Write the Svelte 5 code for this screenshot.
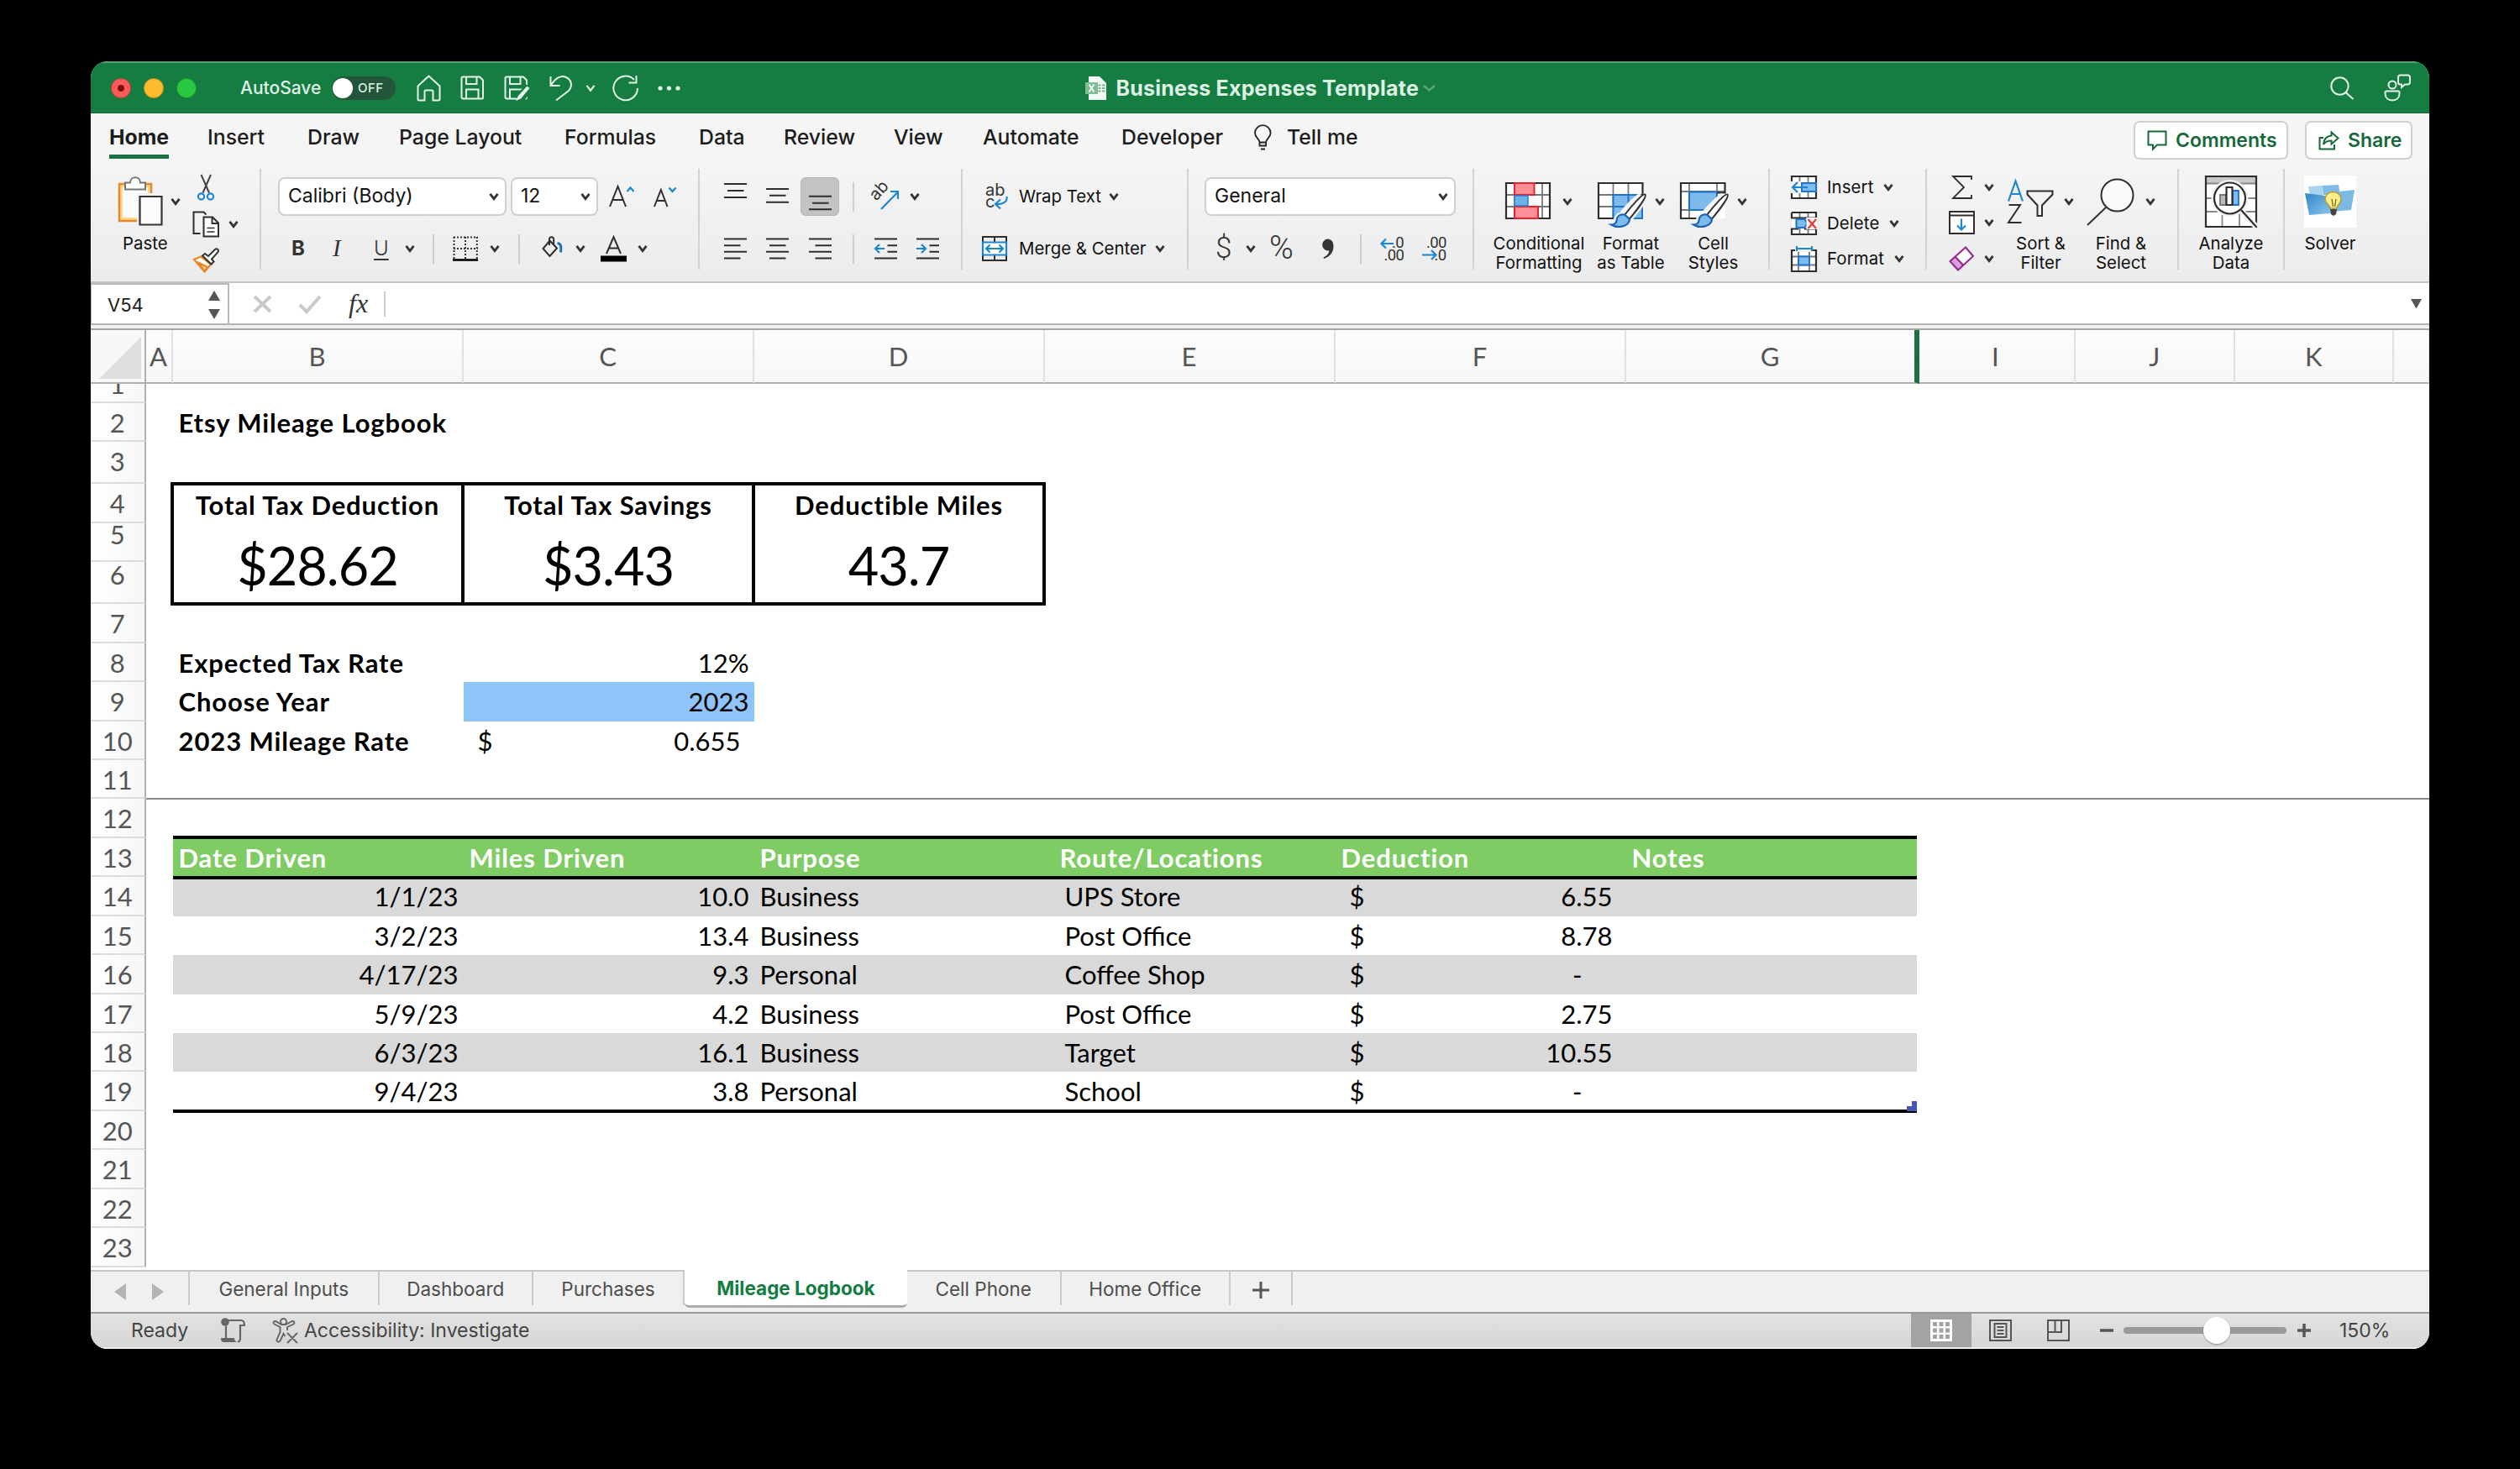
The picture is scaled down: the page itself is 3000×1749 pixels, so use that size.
<script>
  const menu = ['Home', 'Insert', 'Draw', 'Page Layout', 'Formulas', 'Data', 'Review', 'View', 'Automate', 'Developer'];

  const columns = ['A', 'B', 'C', 'D', 'E', 'F', 'G', 'I', 'J', 'K', ''];

  // nudge moves the number of a row that is taller or cut off
  const rows = Array.from({ length: 23 }, (_, i) => ({ n: i + 1, nudge: 0 }));
  rows[0].nudge = -23;
  rows[4].nudge = -10;
  rows[5].nudge = -8;

  const totals = [
    { label: 'Total Tax Deduction', value: '$28.62' },
    { label: 'Total Tax Savings', value: '$3.43' },
    { label: 'Deductible Miles', value: '43.7' },
  ];

  const headings = ['Date Driven', 'Miles Driven', 'Purpose', 'Route/Locations', 'Deduction', 'Notes'];

  const trips = [
    { date: '1/1/23', miles: '10.0', purpose: 'Business', route: 'UPS Store', deduction: '6.55' },
    { date: '3/2/23', miles: '13.4', purpose: 'Business', route: 'Post Office', deduction: '8.78' },
    { date: '4/17/23', miles: '9.3', purpose: 'Personal', route: 'Coffee Shop', deduction: '-' },
    { date: '5/9/23', miles: '4.2', purpose: 'Business', route: 'Post Office', deduction: '2.75' },
    { date: '6/3/23', miles: '16.1', purpose: 'Business', route: 'Target', deduction: '10.55' },
    { date: '9/4/23', miles: '3.8', purpose: 'Personal', route: 'School', deduction: '-' },
  ];

  const sheets = ['General Inputs', 'Dashboard', 'Purchases', 'Mileage Logbook', 'Cell Phone', 'Home Office'];
  let activeSheet = $state('Mileage Logbook');
</script>

{#snippet chevron()}
  <svg class="chev" width="12" height="10" viewBox="0 0 12 10"><path d="M1.5 1.8 6 7.6l4.5-5.8" /></svg>
{/snippet}

{#snippet lines(kind)}
  <svg width="28" height="28" viewBox="0 0 28 28" class="dark">
    {#if kind === 'left'}
      <path d="M0 2.5h27M0 10.2h19.5M0 17.8h27M0 25.5h19.5" />
    {:else if kind === 'center'}
      <path d="M0 2.5h27M4 10.2h19.5M0 17.8h27M4 25.5h19.5" />
    {:else if kind === 'right'}
      <path d="M0 2.5h27M7.5 10.2h19.5M0 17.8h27M7.5 25.5h19.5" />
    {:else}
      <path d="M0 2.5h27M15.5 10.2h11.5M15.5 17.8h11.5M0 25.5h27" />
      {#if kind === 'outdent'}
        <path class="blue" d="M12 14H1M6 9l-5 5 5 5" />
      {:else}
        <path class="blue" d="M0 14h11M6 9l5 5-5 5" />
      {/if}
    {/if}
  </svg>
{/snippet}

{#snippet floppy()}
  <path d="M3 1.5h20l4 4V26a1.5 1.5 0 0 1-1.5 1.5h-22A2 2 0 0 1 1.5 25.5V3A1.5 1.5 0 0 1 3 1.5z" />
  <path d="M7 1.5v8.500h12.500V1.5M7 27.5V16.5h14.500v11" />
{/snippet}

{#snippet paintbrush()}
  <g transform="translate(-6 2)">
    <path class="halo" d="M58 21C52 25 42 35 36 42M61 26 44 48M37 44c-5 0-8 3-8.500 7" />
    <path d="M62.500 19.500c-2.500-2-16 13.500-24.500 24.500l5.500 5c8.500-10 21.500-27 19-29.500z" fill="#fff" stroke="#333" stroke-width="2" />
    <path d="M38 43.500c-6-1-9 2-9.500 7-.4 3.500-3 5-6.500 5 8 5 21.500 2 22-6.500z" fill="#7dbbec" stroke="#1c63b7" stroke-width="2.200" />
  </g>
{/snippet}

<div class="desktop">
  <div class="window">
    <header class="titlebar">
      <div class="lights"><i class="close"></i><i class="min"></i><i class="max"></i></div>
      <span class="autosave">AutoSave</span>
      <span class="toggle"><b></b>OFF</span>
      <svg width="30" height="32" viewBox="0 0 30 32"><path d="M1.5 13.5 14.5 1.5l13 12V29a1.5 1.5 0 0 1-1.5 1.5h-6.500V20a1.5 1.5 0 0 0-1.5-1.5h-7A1.5 1.5 0 0 0 9.500 20v10.500H3A1.5 1.5 0 0 1 1.5 29z" /></svg>
      <svg width="29" height="30" viewBox="0 0 29 30">{@render floppy()}</svg>
      <svg width="31" height="30" viewBox="0 0 31 30">
        {@render floppy()}
        <path d="M30 13 18 29" stroke="#157d42" stroke-width="11" />
        <path d="M27.5 12.5 17 24l-3 6 6-2.500L30.500 15z" fill="#e9f5ec" stroke="none" />
      </svg>
      <svg width="28" height="32" viewBox="0 0 28 32"><path d="M1.5 2v11h11M2 12.5C7 4 14 0 20 3c7 3.500 7.500 11 3 16L8 30.500" /></svg>
      <svg class="chev" width="12" height="10" viewBox="0 0 12 10"><path d="M1.5 1.8 6 7.6l4.5-5.8" /></svg>
      <svg width="34" height="32" viewBox="0 0 34 32"><path d="M27 6A14.3 14.3 0 1 0 31 16M29.5 1v8.500h-9" /></svg>
      <svg width="28" height="8" viewBox="0 0 28 8" class="dots"><circle cx="3" cy="4" r="2.600" /><circle cx="13.500" cy="4" r="2.600" /><circle cx="24" cy="4" r="2.600" /></svg>
      <svg width="27" height="30" viewBox="0 0 27 30" class="file">
        <path d="M4 1h13l8 8v20H4z" fill="#f4faf5" />
        <path d="M15.500 11.500h3M20 11.500h3.500M15.500 15h3M20 15h3.500M15.500 18.500h3M20 18.500h3.500" stroke="#6fb889" stroke-width="1.800" />
        <rect x="0" y="8" width="15" height="14" fill="#7dbf94" />
        <path d="m4.500 10.500 6 9M10.500 10.500l-6 9" stroke="#fff" stroke-width="1.800" />
      </svg>
      <span class="title">Business Expenses Template</span>
      <svg class="faint" width="18" height="10" viewBox="0 0 18 10"><path d="m2 2 6.500 5.500L15 2" /></svg>
      <svg width="30" height="28" viewBox="0 0 30 28"><circle cx="11.500" cy="11.500" r="10.200" /><path d="m18.500 19 9 8" /></svg>
      <svg width="34" height="33" viewBox="0 0 34 33">
        <circle cx="10" cy="13" r="4.500" />
        <path d="M3 20.500h14a1.500 1.500 0 0 1 1.500 1.500v1.500c0 5-3.500 8-8.500 8s-8.500-3-8.500-8V22A1.500 1.500 0 0 1 3 20.500z" />
        <path d="M19.500 1.500h9a2.500 2.500 0 0 1 2.500 2.500v6a2.500 2.500 0 0 1-2.500 2.500h-3.500l-4 3.500v-3.500h-1.500A2.500 2.500 0 0 1 17 10V4a2.500 2.500 0 0 1 2.500-2.500z" />
      </svg>
    </header>

    <nav class="menu">
      {#each menu as item, i}
        <span class:current={i === 0}>{item}</span>
      {/each}
      <svg width="21" height="30" viewBox="0 0 21 30" class="bulb">
        <path d="M6.500 20.500c0-4-5.500-6-5.500-11a9.300 9.300 0 0 1 18.600 0c0 5-5.500 7-5.500 11v4H6.500zM6.500 20.500h7.600M8 28.500h5" />
      </svg>
      <span>Tell me</span>
      <button class="comments">
        <svg width="24" height="24" viewBox="0 0 24 24"><path d="M1.500 1.500h21v16H12l-5 5v-5H1.500z" /></svg>
        Comments
      </button>
      <button class="share">
        <svg width="25" height="23" viewBox="0 0 25 23"><path d="M6 8H1.500v13.500H19V16M15.500 1.500l8 7-8 7v-4c-4.500 0-7.500 1.500-9.500 4.500.5-6 3.500-10 9.500-10.500z" /></svg>
        Share
      </button>
    </nav>

    <section class="ribbon">
      <div class="group clipboard">
        <div class="big paste">
          <div class="art">
            <svg width="54" height="60" viewBox="0 0 54 60">
              <path d="M2 9h38v44H2z" fill="#fcd88d" stroke="#e8862a" stroke-width="2.500" />
              <path d="M6 13h30v36H6z" fill="#fbfbfb" />
              <path d="M9 15.500V7.500h6C15 -1 27 -1 27 7.500h6v8z" fill="#fff" stroke="#777" stroke-width="2" />
              <path d="M23 20h31v40H23z" fill="#f2f2f2" />
              <path d="M26.500 24h26v33.500h-26z" fill="#fbfbfb" stroke="#333" stroke-width="2.200" />
            </svg>
            {@render chevron()}
          </div>
          <span>Paste</span>
        </div>
        <div class="stack">
          <svg width="32" height="32" viewBox="0 0 32 32">
            <path d="m10.500 1 9.500 21.500M22 1l-9.500 21.500" stroke="#444" stroke-width="2" />
            <circle cx="10.500" cy="27" r="3.600" class="blue" /><circle cx="21.500" cy="27" r="3.600" class="blue" />
          </svg>
          <div class="pair">
            <svg width="32" height="32" viewBox="0 0 32 32" class="dark">
              <path d="M9.500 27H1.500V1.500h12l3 3" />
              <path d="M13.500 7.500H24l7 7V30.500H13.500zM23.500 7.500V15H31" fill="#fff" />
              <path d="M17.500 20.500h9M17.500 25h9" stroke-width="1.500" />
            </svg>
            {@render chevron()}
          </div>
          <svg width="32" height="30" viewBox="0 0 32 30">
            <path d="m2 14 8-3.500L22 20l-7.500 8.500z" fill="#fff" stroke="#e8862a" stroke-width="2.200" />
            <path d="m8 18 10 5-3.500 5z" fill="#fcd88d" stroke="#e8862a" stroke-width="2" />
            <path d="M12 9.500 15 7l4 3 8-8c2-2 5 .5 3.500 3L23 13.500l2.500 3-3 3z" fill="#fff" stroke="#333" stroke-width="2" />
          </svg>
        </div>
      </div>

      <div class="group font">
        <div class="line one">
          <div class="select">Calibri (Body) {@render chevron()}</div>
          <div class="select">12 {@render chevron()}</div>
          <svg width="31" height="28" viewBox="0 0 31 28" class="dark"><path d="M1 26 10.500 2 20 26M4.500 18h12" /><path class="blue" d="m21.500 8 4-4.500L29.500 8" /></svg>
          <svg width="29" height="28" viewBox="0 0 29 28" class="dark"><path d="M1 26 8.800 6 16.500 26M4 19h10" /><path class="blue" d="m18.500 3.500 4 4.500 4-4.500" /></svg>
        </div>
        <div class="line two">
          <b class="glyph">B</b>
          <i class="glyph italic">I</i>
          <span class="glyph under">U</span>
          {@render chevron()}
          <hr />
          <svg width="30" height="30" viewBox="0 0 30 30">
            <path d="M1 1.500h29M1 15h29M1.500 1v27M15 1v27M28.800 1v27" stroke="#333" stroke-width="2" stroke-dasharray="2 2" />
            <path d="M0 28.500h30" stroke="#000" stroke-width="2.600" />
          </svg>
          {@render chevron()}
          <hr />
          <svg width="26" height="30" viewBox="0 0 26 30" class="dark">
            <path d="m9.500 5.500 8.500 9L9.500 24l-8-9zM9 11V4c0-4 5-3.500 5.200 0v6" />
            <path d="M18.500 8.500c4 .5 5 3 4 11" stroke="#1c6fbf" stroke-width="3" />
          </svg>
          {@render chevron()}
          <svg width="31" height="32" viewBox="0 0 31 32" class="dark"><path d="M7 22 15.500 2 24 22M10 15.500h11" /><path d="M0 28h31" stroke="#000" stroke-width="7" /></svg>
          {@render chevron()}
        </div>
      </div>

      <div class="group align">
        <div class="line one">
          <svg width="28" height="40" viewBox="0 0 28 40" class="dark"><path d="M0 5h27M4 13h19.500M0 21h27" /></svg>
          <svg width="28" height="40" viewBox="0 0 28 40" class="dark"><path d="M0 11h27M4 18.800h19.500M0 26.800h27" /></svg>
          <div class="pressed"><svg width="28" height="40" viewBox="0 0 28 40" class="dark"><path d="M0 18.800h27M4 26.800h19.500M0 34.300h27" /></svg></div>
          <hr />
          <svg width="33" height="33" viewBox="0 0 33 33">
            <text x="-1" y="0" transform="translate(6 21) rotate(-48)" class="tiny">ab</text>
            <path class="blue" d="M11 31 30.500 11M22 10h9v9" />
          </svg>
          {@render chevron()}
        </div>
        <div class="line two">
          {@render lines('left')}
          {@render lines('center')}
          {@render lines('right')}
          <hr />
          {@render lines('outdent')}
          {@render lines('indent')}
        </div>
      </div>

      <div class="group wrap">
        <div class="line one">
          <svg width="30" height="34" viewBox="0 0 30 34">
            <text x="4" y="16" class="tiny">ab</text><text x="4" y="30" class="tiny">c</text>
            <path class="blue" d="M29.500 17c1 6-4 9.500-12 9M22 20.500 16 26l6 5.500" />
          </svg>
          <span>Wrap Text</span>
          {@render chevron()}
        </div>
        <div class="line two">
          <svg width="30" height="30" viewBox="0 0 30 30" class="dark">
            <path d="M1 1h28v28H1zM15 1v7M15 22v7" />
            <path d="M1 7.500h28v15H1z" fill="#fff" class="blue" />
            <path class="blue" d="M5 15h20M9.500 10.500 5 15l4.500 4.500M20.500 10.500 25 15l-4.500 4.500" />
          </svg>
          <span>Merge &amp; Center</span>
          {@render chevron()}
        </div>
      </div>

      <div class="group number">
        <div class="line one">
          <div class="select">General {@render chevron()}</div>
        </div>
        <div class="line two">
          <span class="sign">$</span>
          {@render chevron()}
          <span class="sign percent">%</span>
          <svg width="17" height="26" viewBox="0 0 17 26"><path d="M8 1.500c5 0 7.500 3.500 7.500 8.500 0 7.500-4.500 13-11.500 15l-.5-1.500c4-1.500 6.500-4.500 7-8A7 7 0 1 1 8 1.500z" fill="#333" /></svg>
          <hr />
          <svg width="32" height="30" viewBox="0 0 32 30"><text x="14" y="13.500" class="digits">.0</text><text x="4.500" y="28.500" class="digits">.00</text><path class="blue" d="M16 9H1.500M7 3.500 1.500 9 7 14.500" /></svg>
          <svg width="32" height="30" viewBox="0 0 32 30"><text x="5" y="13.500" class="digits">.00</text><text x="14.500" y="28.500" class="digits">.0</text><path class="blue" d="M0 22.500h16M11 17l5.500 5.500L11 28" /></svg>
        </div>
      </div>

      <div class="group styles">
        <div class="big">
          <div class="art">
            <svg width="55" height="60" viewBox="0 0 55 60">
              <path d="M1 8h53v42H1z" fill="#fff" /><path d="M11 8v42M44 8v42M1 22h53M1 36h53" stroke="#777" stroke-width="1.800" />
              <path d="M35 8H53v42H39M11 8H1v42h10" class="edge" />
              <path d="M11 8h23.500v14H11zM11 36h28v14H11z" fill="#ff8f96" stroke="#e3242b" stroke-width="2" />
              <path d="M11 23h16v12H11z" fill="#6fb1e8" stroke="#2b7cd3" stroke-width="1.500" />
            </svg>
            {@render chevron()}
          </div>
          <span>Conditional<br />Formatting</span>
        </div>
        <div class="big">
          <div class="art">
            <svg width="59" height="60" viewBox="0 0 59 60">
              <path d="M1 8h53v42H1z" fill="#fff" /><path d="M18.500 8v42M36.500 8v14M1 22h53M1 36h18" stroke="#777" stroke-width="1.800" />
              <path d="M18.500 22H53v28H18.500z" fill="#7dbbec" stroke="#2373c8" stroke-width="2" /><path d="M36.500 22v28M18.500 36H53" stroke="#2373c8" stroke-width="2" />
              <path d="M18.500 50H1V8h52.500v14" class="edge" />
              {@render paintbrush()}
            </svg>
            {@render chevron()}
          </div>
          <span>Format<br />as Table</span>
        </div>
        <div class="big">
          <div class="art">
            <svg width="59" height="60" viewBox="0 0 59 60">
              <path d="M1 8h53v42H1z" fill="#fff" /><path d="M11 8v42M44 8v12M1 18h53M1 40h10" stroke="#777" stroke-width="1.800" />
              <path d="M11 18.500h33V40H11z" fill="#7dbbec" stroke="#2373c8" stroke-width="2.200" />
              <path d="M25 50H1V8h52.500v11.500H44" class="edge" />
              {@render paintbrush()}
            </svg>
            {@render chevron()}
          </div>
          <span>Cell<br />Styles</span>
        </div>
      </div>

      <div class="group cells">
        <div class="row">
          <svg width="31" height="28" viewBox="0 0 31 28">
            <path d="M1 1h29v26H1z" fill="#fff" /><path d="M10.500 1v26M20.500 1v26M1 9h29M1 19h29" stroke="#777" stroke-width="1.800" />
            <path d="M1 7V1h29v26H1v-7" class="edge" /><path d="M13 9h17v10H13z" fill="#7dbbec" stroke="#2373c8" stroke-width="2" />
            <path d="M0 7h12v14H0z" fill="#f2f2f2" /><path class="blue" d="M20 14H2M8 8l-6 6 6 6" />
          </svg>
          <span>Insert</span>{@render chevron()}
        </div>
        <div class="row">
          <svg width="31" height="28" viewBox="0 0 31 28">
            <path d="M1 1h29v26H1z" fill="#fff" /><path d="M10.500 1v7M20.500 1v7M10.500 20v7M20.500 20v7" stroke="#777" stroke-width="1.800" />
            <path d="M1 1h29v6.500H8M1 1v6.500h7v13H1V27h29v-6.500H16" class="edge" />
            <path d="M6.500 9h10l3 5-3 5h-10z" fill="#7dbbec" stroke="#2373c8" stroke-width="2" /><path d="M18.500 7H31v14H18.500z" fill="#f7f7f7" />
            <path d="m20.500 9 9.500 11M30 9l-9.500 11" stroke="#e03a3e" stroke-width="2.200" />
          </svg>
          <span>Delete</span>{@render chevron()}
        </div>
        <div class="row">
          <svg width="31" height="31" viewBox="0 0 31 31">
            <path d="M1 5h29v25H1z" fill="#fff" /><path d="M9 7v23M22 7v23M1 12.500h29M1 22.500h29" stroke="#777" stroke-width="1.800" />
            <path d="M5 5H1v25h29V5h-4" class="edge" /><path d="M9 12.500h13v10H9z" fill="#7dbbec" stroke="#2373c8" stroke-width="2" />
            <path d="M5 0h21v7H5z" fill="#f2f2f2" /><path class="blue" d="M7 3h18M7 0v6M25 0v6" />
          </svg>
          <span>Format</span>{@render chevron()}
        </div>
      </div>

      <div class="group editing">
        <div class="stack">
          <div class="pair">
            <svg width="31" height="28" viewBox="0 0 31 28" class="dark"><path d="M27 5V1H5l13 13L5 27h22v-4" stroke-width="1.800" /></svg>
            {@render chevron()}
          </div>
          <div class="pair">
            <svg width="31" height="28" viewBox="0 0 31 28" class="dark"><path d="M1 1h29v26H1zM1 5.500h29" fill="#fff" /><path class="blue" d="M15 9.500v13M10 17.500l5 5 5-5" /></svg>
            {@render chevron()}
          </div>
          <div class="pair">
            <svg width="31" height="30" viewBox="0 0 31 30">
              <path d="M20 1.500 29 12 11 28.500 1.500 18z" fill="#fff" /><path d="m7.500 12.500-6 5.500L11 28.500l6-5z" fill="#dba0e0" />
              <path d="M20 1.500 29 12 11 28.500 1.500 18zM7.500 12.500l10 10.500" stroke="#92278f" stroke-width="2" />
            </svg>
            {@render chevron()}
          </div>
        </div>
        <div class="big">
          <div class="art">
            <svg width="55" height="60" viewBox="0 0 55 60" class="dark">
              <path class="blue" d="M1 29.500 9.500 5.500 18 29.500M4 21h11" /><path d="M1.500 34H15L1 55h15.500" />
              <path d="M23.500 17.500h30v4L41 34.500V47h-5.500V34.500l-12-13z" />
            </svg>
            {@render chevron()}
          </div>
          <span>Sort &amp;<br />Filter</span>
        </div>
        <div class="big">
          <div class="art">
            <svg width="58" height="60" viewBox="0 0 58 60" class="dark"><circle cx="36.500" cy="22.500" r="19" fill="#fafafa" /><path d="M23 37 1 58" /></svg>
            {@render chevron()}
          </div>
          <span>Find &amp;<br />Select</span>
        </div>
      </div>

      <div class="group analyze">
        <div class="big">
          <div class="art">
            <svg width="62" height="62" viewBox="0 0 62 62">
              <path d="M1 1h60v60H1z" fill="#fff" /><path d="M1 1h60v8H1z" fill="#c8c8c8" />
              <path d="M1 9.500h60M1 27h60M1 43h60M20.500 43v18M41 43v18" stroke="#888" stroke-width="1.800" />
              <path d="M1 1h60v60H1z" class="edge" />
              <circle cx="29.500" cy="27" r="22" fill="#f2f2f2" /><circle cx="29.500" cy="27" r="18.500" fill="#fff" class="edge" />
              <path d="M18 23h7v12h-7z" fill="#bbb" stroke="#777" stroke-width="1.800" /><path d="M33 18h7v17h-7z" fill="#7dbbec" stroke="#2373c8" stroke-width="1.800" /><path d="M25.500 14h7v21h-7z" fill="#fff" class="edge" />
              <path d="m43 42 18 19" stroke="#f2f2f2" stroke-width="7" /><path d="m43 41 18 20" class="edge" />
            </svg>
          </div>
          <span>Analyze<br />Data</span>
        </div>
      </div>

      <div class="group solver">
        <div class="big">
          <div class="art">
            <svg width="62" height="62" viewBox="0 0 62 62">
              <defs>
                <linearGradient id="sky" x1="0" y1="0" x2="1" y2="1"><stop offset="0" stop-color="#2f86ca" /><stop offset="1" stop-color="#8cc7ec" /></linearGradient>
              </defs>
              <path d="M0 0h62v62H0z" fill="#fff" />
              <path d="m5 13 16-1 2 18-15 1z" fill="#a9d3ef" /><path d="m21 12 20-1 2 12H23z" fill="#7fbde8" />
              <path d="m33 20 27-3-4 24-23 2z" fill="#7cb9e4" /><path d="m1 21 32 4-1 20L6 47z" fill="url(#sky)" />
              <path d="M31 39c0-4-6-6-6-11a9.500 8.500 0 0 1 19 0c0 5-5 7-5 11z" fill="#fdf08a" stroke="#b89a2c" stroke-width="1.500" />
              <path d="m33 28 1.500 9M38 28l-1.500 9" stroke="#7a6514" stroke-width="1.300" /><path d="M31 40h8l-1 6-3 2-3-2z" fill="#444" />
            </svg>
          </div>
          <span>Solver</span>
        </div>
      </div>
    </section>

    <section class="formula">
      <div class="namebox">
        V54
        <svg width="14" height="34" viewBox="0 0 14 34"><path d="M7 0l7 12H0zM7 34l7-12H0z" fill="#555" /></svg>
      </div>
      <svg width="23" height="22" viewBox="0 0 23 22" class="off"><path d="m2 2 19 18M21 2 2 20" /></svg>
      <svg width="28" height="22" viewBox="0 0 28 22" class="off"><path d="m2 12 8 8L26 2" /></svg>
      <em>fx</em>
      <hr />
      <svg width="14" height="12" viewBox="0 0 14 12"><path d="M0 0h13L6.500 11.500z" fill="#555" /></svg>
    </section>

    <section class="sheet">
      <div class="corner"><svg width="50" height="50" viewBox="0 0 50 50"><path d="M50 0v50H0z" fill="#dedede" /></svg></div>
      {#each columns as name, i}
        <div class="col" class:frozen={name === 'G'} style:grid-column={i + 2}>{name}</div>
      {/each}
      {#each rows as row}
        <div class="num" style:grid-row={row.n + 1}><span style:margin-top="{row.nudge}px">{row.n}</span></div>
      {/each}

      <div class="cell bold b2">Etsy Mileage Logbook</div>
      <div class="totals">
        {#each totals as total}
          <div><b>{total.label}</b><span>{total.value}</span></div>
        {/each}
      </div>
      <div class="cell bold b8">Expected Tax Rate</div>
      <div class="cell right c8">12%</div>
      <div class="cell bold b9">Choose Year</div>
      <div class="cell right c9">2023</div>
      <div class="cell bold b10">2023 Mileage Rate</div>
      <div class="cell money c10"><span>$</span><span>0.655</span></div>
      <div class="freeze"></div>

      <div class="record heading">
        {#each headings as text}
          <div class="cell bold">{text}</div>
        {/each}
      </div>
      {#each trips as trip, i}
        <div class="record" class:band={i % 2 === 0} style:grid-row={i + 15}>
          <div class="cell right">{trip.date}</div>
          <div class="cell right">{trip.miles}</div>
          <div class="cell">{trip.purpose}</div>
          <div class="cell route">{trip.route}</div>
          <div class="cell money"><span>$</span><span class:dash={trip.deduction === '-'}>{trip.deduction}</span></div>
        </div>
      {/each}
      <div class="tableend"><svg width="12" height="12" viewBox="0 0 12 12"><path d="M6 0h6v12H0V6h6z" fill="#4457b4" /></svg></div>
    </section>

    <footer class="tabs">
      <div class="arrows">
        <svg width="14" height="20" viewBox="0 0 14 20"><path d="M14 0v20L0 10z" fill="#b3b3b3" /></svg>
        <svg width="14" height="20" viewBox="0 0 14 20"><path d="M0 0v20l14-10z" fill="#b3b3b3" /></svg>
      </div>
      {#each sheets as name}
        <button class:active={activeSheet === name} onclick={() => (activeSheet = name)}>{name}</button>
      {/each}
      <div class="add"><svg width="20" height="20" viewBox="0 0 20 20"><path d="M10 0v20M0 10h20" stroke="#555" stroke-width="3" /></svg></div>
    </footer>

    <footer class="status">
      <span>Ready</span>
      <svg width="30" height="30" viewBox="0 0 30 30">
        <circle cx="5" cy="5" r="4.800" fill="#666" />
        <path d="M6 10v14M9 3h15c3 0 4 2 4 6h-5M23 8v16c0 3-1 4.500-3 4.500" stroke="#666" stroke-width="2.200" />
        <path d="M0 24h16c0 3 1.500 4.500 4 5H4c-3 0-4-2-4-5z" fill="#666" />
      </svg>
      <svg width="31" height="31" viewBox="0 0 31 31" stroke="#666" stroke-width="1.900">
        <circle cx="12.500" cy="4.500" r="3.500" />
        <path d="M17 15v-4l7.500-3.500c2-1.500.5-4-1.500-3.500L15 8h-5L3 4C1 3.500-.5 6 1.500 7.500L8.500 11v6L4.500 26c-.5 2.500 2.500 3.500 4 1.500L12.500 19l2 3M17 18l12 12M29 18 17 30" />
      </svg>
      <span>Accessibility: Investigate</span>
      <div class="views">
        <div class="on">
          <svg width="26" height="26" viewBox="0 0 26 26"><path d="M0 0h26v26H0z" fill="#fff" /><path d="M3 3h5v5H3zM10.500 3h5v5h-5zM18 3h5v5h-5zM3 10.500h5v5H3zM10.500 10.500h5v5h-5zM18 10.500h5v5h-5zM3 18h5v5H3zM10.500 18h5v5h-5zM18 18h5v5h-5z" fill="#a3a3a3" /></svg>
        </div>
        <svg width="27" height="26" viewBox="0 0 27 26" stroke="#555" stroke-width="2"><path d="M1 1h25v24H1zM6.500 5h14v16h-14zM9.500 9h8M9.500 13h8M9.500 17h8" /></svg>
        <svg width="27" height="26" viewBox="0 0 27 26" stroke="#555" stroke-width="2"><path d="M1 1h25v24H1zM1 15h16V1M9.500 1v14" /></svg>
      </div>
      <svg width="16" height="16" viewBox="0 0 16 16"><path d="M0 8h16" stroke="#555" stroke-width="3.500" /></svg>
      <div class="zoom"><i></i></div>
      <svg width="16" height="16" viewBox="0 0 16 16"><path d="M0 8h16M8 0v16" stroke="#555" stroke-width="3.500" /></svg>
      <span>150%</span>
    </footer>
  </div>
</div>

<style>
  :global(body) {
    margin: 0;
    background: #000;
  }

  * {
    box-sizing: border-box;
  }

  .desktop {
    width: 3000px;
    height: 1749px;
    padding: 73px 0 0 108px;
    background: #000;
    font-family: Inter, 'Liberation Sans', sans-serif;
    color: #1c1c1c;
  }

  .window {
    width: 2784px;
    height: 1533px;
    border-radius: 20px;
    overflow: hidden;
    background: #fff;
    display: flex;
    flex-direction: column;
  }

  svg {
    display: block;
    fill: none;
    overflow: visible;
    flex: none;
  }

  hr {
    width: 2px;
    height: 35px;
    margin: 0;
    border: 0;
    background: #cdcdcd;
  }

  button {
    font: inherit;
    color: inherit;
    border: 0;
    padding: 0;
    background: none;
  }

  .chev path {
    stroke: #333;
    stroke-width: 2.8;
  }

  .dark {
    stroke: #2e2e2e;
    stroke-width: 2;
  }

  .blue {
    stroke: #1b86d1;
    stroke-width: 2.2;
  }

  .edge {
    stroke: #2e2e2e;
    stroke-width: 2.2;
  }

  .halo {
    stroke: #f4f4f4;
    stroke-width: 8;
  }

  .tiny {
    font-size: 20px;
    fill: #333;
    stroke: none;
  }

  .digits {
    font-family: Roboto, sans-serif;
    font-size: 18.5px;
    letter-spacing: -0.6px;
    fill: #333;
  }

  /* title bar */
  .titlebar {
    flex: none;
    height: 62px;
    display: grid;
    grid-template-columns: 154px 109px 101px 52px 52px 54px 43px 31px 55px 508.5px 37px 364px 1081px 64px 54px;
    justify-content: start;
    justify-items: start;
    align-items: center;
    padding-left: 24px;
    background: #157d42;
    border-top: 2px solid #56a077;
    border-bottom: 1px solid #0f6d37;
    color: #dff1e4;
  }

  .titlebar svg {
    stroke: #e4f4e8;
    stroke-width: 2;
  }

  .titlebar .chev path {
    stroke: #e4f4e8;
    stroke-width: 2.2;
  }

  .titlebar .dots {
    fill: #e4f4e8;
    stroke: none;
  }

  .titlebar .file {
    stroke: none;
  }

  .titlebar .faint {
    stroke: #5aa87a;
    stroke-width: 2.4;
  }

  .lights {
    display: flex;
    gap: 15px;
  }

  .lights i {
    width: 24px;
    height: 24px;
    border-radius: 50%;
    border: 1px solid #0004;
  }

  .close {
    background: radial-gradient(circle, #7d0f0b 0 3.5px, #fc5b57 4.5px);
  }

  .min {
    background: #fdbc2e;
  }

  .max {
    background: #28c840;
  }

  .autosave {
    font-size: 21px;
    font-weight: 500;
  }

  .toggle {
    width: 76px;
    height: 28px;
    border-radius: 14px;
    background: #24553b;
    display: flex;
    align-items: center;
    gap: 6px;
    padding-left: 1px;
    font-size: 15px;
    font-weight: 500;
    letter-spacing: 0.5px;
  }

  .toggle b {
    width: 24px;
    height: 24px;
    border-radius: 50%;
    background: #fff;
  }

  .title {
    font-size: 25px;
    font-weight: 700;
    letter-spacing: 0.2px;
    white-space: nowrap;
  }

  /* menu */
  .menu {
    flex: none;
    height: 66px;
    display: grid;
    grid-template-columns: 117px 119px 109px 197px 160px 101px 131px 106px 165px 158px 39px 1008px 204px 128px;
    justify-items: start;
    padding: 8px 0 0 22px;
    background: #f5f5f5;
    font-size: 24.8px;
    font-weight: 500;
    line-height: 41px;
    white-space: nowrap;
    align-items: start;
  }

  .menu .current {
    font-weight: 700;
    height: 46px;
    border-bottom: 5px solid #1c7044;
  }

  .bulb {
    margin-top: 6px;
    stroke: #222;
    stroke-width: 1.8;
  }

  .menu button {
    height: 46px;
    display: flex;
    align-items: center;
    gap: 10px;
    margin-top: 1px;
    background: #fff;
    border: 2px solid #d0d0d0;
    border-radius: 7px;
    font-size: 23px;
    font-weight: 600;
    color: #17693b;
    padding-left: 14px;
  }

  .menu button svg {
    stroke: #17693b;
    stroke-width: 2;
  }

  .comments {
    width: 184px;
  }

  .share {
    width: 128px;
  }

  /* ribbon */
  .ribbon {
    flex: none;
    height: 136px;
    display: flex;
    align-items: flex-start;
    background: linear-gradient(#f4f4f4, #ececec);
    border-bottom: 2px solid #c4c4c4;
    font-size: 20.4px;
    line-height: 23.3px;
    color: #111;
  }

  .group {
    height: 120px;
    border-right: 2px solid #d2d2d2;
  }

  .line {
    display: grid;
    align-items: center;
    justify-items: start;
    white-space: nowrap;
  }

  .one {
    height: 46px;
    margin-top: 10px;
  }

  .two {
    height: 36px;
    margin-top: 21px;
  }

  .select {
    width: 100%;
    height: 46px;
    display: flex;
    align-items: center;
    justify-content: space-between;
    padding: 0 7px 0 10px;
    background: #fff;
    border: 2px solid #cfcfcf;
    border-radius: 8px;
    font-size: 23px;
  }

  .big {
    display: flex;
    flex-direction: column;
    align-items: center;
    text-align: center;
    white-space: nowrap;
  }

  .art {
    height: 77px;
    display: flex;
    align-items: center;
    gap: 10px;
  }

  .clipboard {
    width: 203px;
    display: flex;
    padding-left: 32px;
  }

  .paste {
    width: 74px;
    align-items: flex-start;
  }

  .paste span {
    padding-left: 6px;
  }

  .paste .art {
    gap: 9px;
  }

  .stack {
    display: flex;
    flex-direction: column;
    gap: 12px;
    padding: 6px 0 0 15px;
  }

  .pair {
    display: flex;
    align-items: center;
    gap: 11px;
  }

  .font {
    width: 522px;
    padding-left: 20px;
  }

  .font .one {
    grid-template-columns: 272px 104px 30px 30px;
    column-gap: 5px;
  }

  .font .one svg:nth-of-type(1) {
    margin-left: 8px;
  }

  .font .one svg:nth-of-type(2) {
    margin-left: 26px;
  }

  .font .two {
    grid-template-columns: 49px 49px 37px 33px 24px 44px 34px 28px 40px 30px 44px 14px;
    padding-left: 16px;
  }

  .glyph {
    font-size: 24px;
    font-weight: 400;
    color: #333;
  }

  b.glyph {
    font-weight: 700;
  }

  .italic {
    font-family: 'Liberation Serif', serif;
    font-size: 29px;
  }

  .under {
    font-weight: 300;
    text-decoration: underline;
    text-underline-offset: 4px;
    text-decoration-thickness: 2px;
  }

  .align {
    width: 313px;
    padding-left: 29px;
  }

  .align .one {
    grid-template-columns: 50px 41px 62px 23px 45px 14px;
  }

  .align .two {
    grid-template-columns: 50px 51px 52px 26px 50px 28px;
  }

  .pressed {
    width: 46px;
    height: 46px;
    padding: 3px 9px;
    border-radius: 6px;
    background: #c3c3c3;
    border: 1px solid #b5b5b5;
  }

  .wrap {
    width: 269px;
    padding-left: 23px;
  }

  .wrap .line {
    grid-template-columns: 44px 107px 14px;
  }

  .wrap .two {
    grid-template-columns: 44px 162px 14px;
  }

  .number {
    width: 340px;
    padding-left: 19px;
  }

  .number .one {
    width: 299px;
  }

  .number .two {
    grid-template-columns: 36px 28px 61px 47px 24px 50px 32px;
    padding-left: 13px;
  }

  .sign {
    font-family: Roboto, sans-serif;
    font-size: 35px;
    font-weight: 300;
    color: #333;
  }

  .percent {
    font-size: 39px;
  }

  .styles {
    width: 352px;
    display: grid;
    grid-template-columns: 108px 111px 85px;
    padding-left: 23px;
  }

  .styles .art {
    gap: 13px;
  }

  .styles .big + .big .art {
    gap: 9px;
  }

  .cells {
    width: 187px;
    padding: 8px 0 0 25px;
    display: flex;
    flex-direction: column;
    gap: 14.5px;
    letter-spacing: 0.1px;
  }

  .row {
    height: 28px;
    display: flex;
    align-items: center;
    gap: 12px;
  }

  .editing {
    width: 300px;
    display: grid;
    grid-template-columns: 92px 87px 104px;
  }

  .editing .stack {
    padding: 8px 0 0 26px;
    gap: 14px;
  }

  .editing .art {
    gap: 12px;
  }

  .analyze {
    width: 126px;
  }

  .solver {
    width: 108px;
    border: 0;
  }

  /* formula bar */
  .formula {
    flex: none;
    height: 56px;
    display: grid;
    grid-template-columns: 193px 54px 60px 42px 2413px 20px;
    align-items: center;
    background: #fff;
    border-bottom: 2px solid #a5a5a5;
    box-shadow: inset 0 -4px #efefef, inset 0 -6px #b5b5b5;
    padding-bottom: 5px;
  }

  .namebox {
    width: 165px;
    height: 49px;
    display: flex;
    align-items: center;
    justify-content: space-between;
    padding: 0 9px 0 19px;
    border: 2px solid #b8b8b8;
    border-width: 2px 2px 0 1px;
    font-size: 22px;
  }

  .off {
    stroke: #c9c9c9;
    stroke-width: 4;
  }

  .formula em {
    font-family: 'Liberation Serif', serif;
    font-size: 32px;
    color: #333;
  }

  .formula hr {
    height: 30px;
  }

  /* sheet */
  .sheet {
    flex: none;
    height: 1119px;
    overflow: hidden;
    display: grid;
    grid-template-columns: 65.5px 32px repeat(6, 346px) 189.5px 189.5px 189.5px 43px;
    grid-template-rows: 63.5px 23.4px 46.4px 50px 46.4px 46.6px 50px 46.4px repeat(16, 46.45px);
    font-family: Lato, 'Liberation Sans', sans-serif;
    font-size: 31px;
    line-height: 47px;
    color: #000;
    background: #fff;
  }

  .corner {
    grid-area: 1 / 1;
    padding: 8px 0 0 10px;
    border-right: 2px solid #b0b0b0;
    border-bottom: 2px solid #b0b0b0;
    background: #f8f8f8;
  }

  .col {
    grid-row: 1;
    text-align: center;
    line-height: 63px;
    color: #555;
    border-bottom: 2px solid #b0b0b0;
    border-right: 2px solid #e0e0e0;
    background: linear-gradient(#fdfdfd, #f6f6f6);
  }

  .col.frozen {
    border-right: 6px solid #1c7044;
    margin-right: -3px;
    z-index: 1;
  }

  .num {
    grid-column: 1;
    display: flex;
    justify-content: center;
    overflow: hidden;
    color: #555;
    border-right: 2px solid #b0b0b0;
    border-bottom: 2px solid #dcdcdc;
    background: linear-gradient(90deg, #fff, #f6f6f6);
  }

  .cell {
    padding-left: 7px;
    white-space: nowrap;
  }

  .bold {
    font-weight: 700;
    letter-spacing: 0.9px;
  }

  .right {
    text-align: right;
    padding-right: 6px;
  }

  .b2 { grid-area: 3 / 3; }
  .b8 { grid-area: 9 / 3; }
  .c8 { grid-area: 9 / 4; }
  .b9 { grid-area: 10 / 3; }
  .c9 { grid-area: 10 / 4; background: #8fc4f8; }
  .b10 { grid-area: 11 / 3; }
  .c10 { grid-area: 11 / 4; }

  .money {
    display: flex;
    justify-content: space-between;
    padding: 0 16px 0 17px;
  }

  .dash {
    padding-right: 36px;
  }

  .totals {
    grid-area: 5 / 3 / 8 / 6;
    display: grid;
    grid-template-columns: 342px 346px 346px;
    margin: -2px -1.5px -2px -2.5px;
    border: 4px solid #000;
    text-align: center;
  }

  .totals div + div {
    border-left: 4px solid #000;
  }

  .totals b {
    display: block;
    line-height: 46px;
    letter-spacing: 0.9px;
  }

  .totals span {
    display: block;
    font-size: 63px;
    line-height: 92px;
    margin-top: 3px;
    letter-spacing: -1px;
  }

  .freeze {
    grid-area: 13 / 2 / 14 / 13;
    height: 2px;
    margin-top: -1px;
    background: #8a8a8a;
  }

  .record {
    grid-column: 3 / 9;
    display: grid;
    grid-template-columns: repeat(6, 346px);
  }

  .band {
    background: #d9d9d9;
  }

  .heading {
    grid-row: 14;
    margin: -2.5px 0;
    border: 4px solid #000;
    border-width: 4px 0;
    background: #7fcc64;
    color: #fff;
    z-index: 1;
    line-height: 44px;
  }

  .heading .cell:nth-child(4) {
    padding-left: 18px;
  }

  .route {
    padding-left: 24px;
  }

  .tableend {
    grid-area: 21 / 3 / 22 / 9;
    height: 16px;
    margin-top: -14px;
    border-bottom: 4px solid #000;
    display: flex;
    justify-content: flex-end;
  }

  .tableend svg {
    margin-top: 2px;
  }

  /* sheet tabs */
  .tabs {
    flex: none;
    height: 50px;
    display: grid;
    grid-template-columns: 118px 225.5px 183.5px 180px 265px 183.5px 201.5px 73.5px;
    border-top: 2px solid #c6c6c6;
    background: #f0f0f0;
    font-size: 22.5px;
    color: #4d4d4d;
  }

  .arrows {
    display: flex;
    gap: 31px;
    padding: 14px 0 0 28px;
  }

  .arrows,
  .tabs button,
  .add {
    height: 40px;
    border-right: 2px solid #cacaca;
  }

  .tabs .active {
    height: 45px;
    margin-top: -2px;
    background: #fff;
    border: 0;
    border-bottom: 3px solid #ababab;
    border-radius: 0 0 6px 6px;
    color: #147c41;
    font-weight: 700;
  }

  .add {
    display: flex;
    align-items: center;
    justify-content: center;
    padding-top: 4px;
  }

  /* status bar */
  .status {
    flex: 1;
    display: grid;
    grid-template-columns: 107px 62px 37px 1913px 225px 28px 207px 50px 100px;
    align-items: center;
    padding-left: 48px;
    background: linear-gradient(#e2e2e2, #d6d6d6);
    border-top: 2px solid #999;
    border-bottom: 2px solid #ededed;
    font-size: 23px;
    color: #444;
  }

  .views {
    height: 100%;
    display: flex;
    align-items: center;
    gap: 42px;
  }

  .views .on {
    width: 72px;
    height: 100%;
    display: flex;
    align-items: center;
    justify-content: center;
    margin-right: -21px;
    background: #a3a3a3;
  }

  .zoom {
    width: 194px;
    height: 8px;
    border-radius: 4px;
    background: #999;
    display: flex;
    align-items: center;
    padding-left: 95px;
  }

  .zoom i {
    width: 32px;
    height: 32px;
    border-radius: 50%;
    background: #fff;
    box-shadow: 0 1px 2px #0005;
  }
</style>
